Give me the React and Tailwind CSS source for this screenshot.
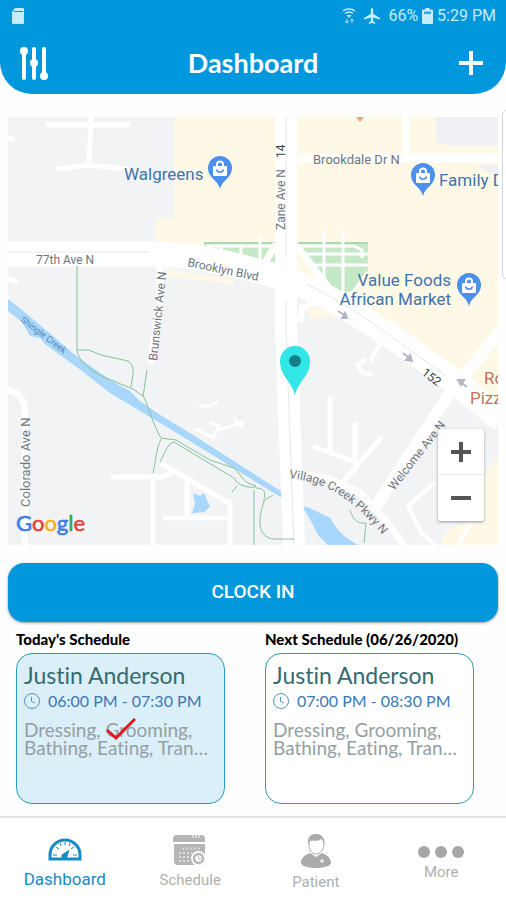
import clsx from 'clsx';

const pois = [
	{ x: 220, y: 184 },
	{ x: 423, y: 191 },
	{ x: 469, y: 301 },
];

const logoLetters = [
	{ letter: 'G', color: '#3f7ee8' },
	{ letter: 'o', color: '#e0453a' },
	{ letter: 'o', color: '#f2b51c' },
	{ letter: 'g', color: '#3f7ee8' },
	{ letter: 'l', color: '#36a455' },
	{ letter: 'e', color: '#e0453a' },
];

const schedules = [
	{
		id: 'today',
		heading: "Today's Schedule",
		name: 'Justin Anderson',
		time: '06:00 PM - 07:30 PM',
		tasks: ['Dressing, Grooming,', 'Bathing, Eating, Tran…'],
		done: true,
	},
	{
		id: 'next',
		heading: 'Next Schedule (06/26/2020)',
		name: 'Justin Anderson',
		time: '07:00 PM - 08:30 PM',
		tasks: ['Dressing, Grooming,', 'Bathing, Eating, Tran…'],
		done: false,
	},
];

const StatusBar = () => (
	<div className="flex h-8 items-center justify-between pr-2.5 pl-3 text-[#c5ecfb]">
		<svg width="12" height="16" viewBox="0 0 12 16" fill="currentColor">
			<path d="M3 0h8a1 1 0 0 1 1 1v14a1 1 0 0 1-1 1H1a1 1 0 0 1-1-1V4z" />
			<path d="M2 3.500h9" stroke="#0097dc" strokeWidth="1" />
		</svg>
		<div className="flex items-center gap-1 font-[Roboto,sans-serif] text-base">
			<svg width="14" height="16" viewBox="0 0 14 16" fill="none">
				<g stroke="currentColor" strokeWidth="1.500">
					<path d="M1 3c3.500-2.700 8.500-2.700 12 0M3 5.500c2.500-1.800 5.500-1.800 8 0" />
				</g>
				<path d="M4.500 7h5L7 10z" fill="currentColor" />
				<path
					d="M5 11v4M3.500 13.500 5 15l1.500-1.500M10 15v-4M8.500 12.500 10 11l1.500 1.500"
					stroke="currentColor"
				/>
			</svg>
			<svg
				className="mx-1"
				width="16"
				height="16"
				viewBox="0 0 16 16"
				fill="currentColor">
				<path d="M8 0c.8 0 1.200.8 1.200 1.800v4L16 10v1.600l-6.800-2v3.600l2 1.500V16L8 15l-3.200 1v-1.300l2-1.500V9.600L0 11.600V10l6.800-4.200v-4C6.800.8 7.200 0 8 0z" />
			</svg>
			<span>66%</span>
			<svg width="11" height="16" viewBox="0 0 11 16" fill="currentColor">
				<path d="M3.500 0h4v1.500H10a1 1 0 0 1 1 1V15a1 1 0 0 1-1 1H1a1 1 0 0 1-1-1V2.500a1 1 0 0 1 1-1h2.500z" />
				<path d="M2 3.500h7v2.500H2z" fill="#2fa9e2" />
			</svg>
			<span>5:29 PM</span>
		</div>
	</div>
);

const Header = () => (
	<header className="rounded-b-[32px] bg-[#0097dc] text-white">
		<StatusBar />
		<div className="flex h-[62px] items-center justify-between px-5">
			<button type="button" aria-label="Filters">
				<svg
					width="28"
					height="34"
					viewBox="0 0 28 34"
					fill="currentColor"
					stroke="currentColor"
					strokeWidth="4"
					strokeLinecap="round">
					<path d="M4 4v28M14 3v29M24 3v28" />
					<g stroke="none">
						<circle cx="4" cy="5" r="4" />
						<circle cx="14" cy="17" r="4" />
						<circle cx="24" cy="30" r="4" />
					</g>
				</svg>
			</button>
			<h1 className="font-[Lato,sans-serif] text-[27px] font-bold">
				Dashboard
			</h1>
			<button type="button" aria-label="Add">
				<svg width="28" height="24" viewBox="0 0 28 24">
					<path
						d="M13 0v24M1 12h24"
						stroke="currentColor"
						strokeWidth="4"
					/>
				</svg>
			</button>
		</div>
	</header>
);

const PoiPin = ({ x, y }) => (
	<g transform={`translate(${x} ${y})`}>
		<path
			d="M0 5C-2-4-12-6-12-16a12 12 0 0 1 24 0C12-6 2-4 0 5z"
			fill="#4a90ec"
		/>
		<rect x="-7" y="-18" width="14" height="10" rx="1" fill="#fff" />
		<path
			d="M-3-18v-1.500a3 3 0 0 1 6 0v1.500"
			fill="none"
			stroke="#fff"
			strokeWidth="2"
		/>
		<path
			d="M-3.500-14.500c1 3.500 6 3.500 7 0"
			fill="none"
			stroke="#4a90ec"
			strokeWidth="1.500"
		/>
	</g>
);

const MapCanvas = () => (
	<svg
		className="block h-auto w-full font-[Roboto,sans-serif]"
		viewBox="8 117 490 428"
		role="img"
		aria-label="Map">
		<rect x="8" y="117" width="490" height="428" fill="#f1f3f4" />

		{/* Commercial areas */}
		<g fill="#fef9e6">
			<path d="M174 117H498V412L440 362L350 302L280 278L155 244V218H174z" />
			<path d="M165 268l68 12v5l-68-9zM308 309l18-2 12 10-28 2zM484 470l14-12v87h-56c-2-12 10-18 22-21l20-4z" />
		</g>
		<path d="M436 117h62v29h-50l-12-4zM476 166l22-2v12z" fill="#eef0f4" />
		<path d="M204 242h72v22l-30-5-42-9zM297 242h71v28l-14 20-14 4-20-12z" fill="#c5e8c6" />
		<path d="M204 243h70M299 243h69" fill="none" stroke="#abd8ae" strokeWidth="2" />
		<path
			d="M206 246h68M221 245v16M241 245v18M260 236v28M298 246h56l8 4v8M300 254h68M308 265h60M324 230v50M343 230v62M367 273l-18 24"
			fill="none"
			stroke="#fff"
			strokeWidth="3"
		/>

		{/* Water */}
		<g fill="#a9d7fb">
			<path d="M8 299l14 11 38 32 15 13 35 25 20 11 10 10 17 12 33 20 92 59v6l-97-60-35-21-25-15-15-9-28-22-37-27-5-6-10-2-8-14-14-11z" />
			<path d="M302 506l8 2 14 7c8 2 8 7 12 12 6 8 10 11 22 18h-30l-10-10-6-12z" />
			<path d="M193 493l7 3 4-3 6 14-6 5-12 1 3-9z" />
		</g>

		{/* Minor streets */}
		<g fill="none" stroke="#fff" strokeWidth="5" strokeLinecap="round">
			<path d="M48 125h80M91 117l-2 49M58 169l31-4 38 4M8 138l5 1M8 278l8 4" />
			<path d="M160 252v50l-9 58" strokeWidth="7" />
			<path d="M8 390c10 2 15 8 17 18v137" strokeWidth="6" />
			<path d="M113 477h50l9-5M153 477v68M162 464l65 38M187 482v34M165 518h62M230 502v43" strokeWidth="5" />
			<path d="M200 406h10l7-4M196 429l17 9 6-12-8-3M220 430l23-8M234 418l8 9" strokeWidth="3" />
			<path d="M330 399v52M315 447l43 16M355 424v34M380 439l-36 42" />
			<path d="M380 343l-9 18M357 365l6 8 8 1M357 365l8-5" strokeWidth="4" />
			<path d="M434 483l-26 23 14 28 12 10M470 525l-12 20" strokeWidth="4" />
			<path d="M404 545l-18-24-26-28-30-14-38-7" strokeWidth="7" />
		</g>

		{/* Main roads */}
		<g fill="none" stroke="#fff">
			<path d="M298 158H498" strokeWidth="9" />
			<path d="M406 117v40" strokeWidth="7" />
			<path d="M8 254H150C200 254 240 266 290 280C340 300 390 334 452 380L502 420" strokeWidth="25" />
			<path d="M286 117V330L294 545" strokeWidth="22" />
			<path d="M262 268l14-24M297 246l32 42" strokeWidth="7" />
			<path d="M300 322l2-14 16-6" strokeWidth="6" />
			<path d="M372 512L452 390L500 332" strokeWidth="12" />
		</g>
		<g fill="none" stroke="#e6e8eb">
			<path d="M8 252H150M286 117V255M286 300V330L294 545M306 284C350 304 390 336 446 376" />
		</g>
		<g stroke="#b4b7c6" strokeWidth="2" fill="#b4b7c6">
			<path d="M338 311l6 4M347 318l-5 0 3-5zM403 353l5 4M412 361l-6-1 4-5zM467 387l-5-4M458 380l6 0-3 5z" />
		</g>

		{/* Trails */}
		<g fill="none" stroke="#84c29b" strokeWidth="1">
			<path d="M77 266v84c2 14 18 24 34 30l22 9 11 8c6 14 10 30 17 41l15 2 34 20 24 8c10 10 8 14 22 18" />
			<path d="M77 350l12 0 12 5 27 6c6 4 5 10 5 14l-2 12M147 370l-4 27M161 439c-5 10-5 22-8 34M160 462c5-10 8-19 14-20l60 36c3 6 10 10 22 9M232 492l5-6M254 490v55M256 488c12 0 8 8 8 14-8 22-4 36 10 37h20M265 500l8-5M350 510c3 10 8 14 16 13l-2 20" />
		</g>

		{/* Street labels */}
		<g fill="#71757a" fontSize="12">
			<text x="36" y="264">77th Ave N</text>
			<text x="313" y="164" fontSize="13">
				Brookdale Dr N
			</text>
			<text transform="translate(187 266) rotate(12)">Brooklyn Blvd</text>
			<text transform="translate(285 230) rotate(-90)">Zane Ave N</text>
			<text transform="translate(157 361) rotate(-84)">Brunswick Ave N</text>
			<text transform="translate(30 507) rotate(-90)" fontSize="13">
				Colorado Ave N
			</text>
			<text transform="translate(394 491) rotate(-52)">Welcome Ave N</text>
			<path id="village-creek" d="M289 478C325 482 352 496 388 542" fill="none" />
			<text>
				<textPath href="#village-creek">Village Creek Pkwy N</textPath>
			</text>
		</g>
		<text transform="translate(20 321) rotate(37)" fontSize="9" fill="#4f86b4">
			Shingle Creek
		</text>
		<g fill="#3c4043" fontSize="12">
			<text transform="translate(285 158) rotate(-90)">14</text>
			<text transform="translate(421 374) rotate(38)">152</text>
		</g>

		{/* Places */}
		<g fill="#4272ac" fontSize="17">
			<text x="124" y="180">Walgreens</text>
			<text x="439" y="186">Family Dollar</text>
			<text x="451" y="286" textAnchor="end">Value Foods</text>
			<text x="451" y="305" textAnchor="end">African Market</text>
		</g>
		<g fill="#c27058" fontSize="17">
			<text x="484" y="384">Rocco's</text>
			<text x="470" y="404">Pizza</text>
		</g>
		{pois.map((poi) => (
			<PoiPin key={poi.x} x={poi.x} y={poi.y} />
		))}
		<path d="M356 117h8l-4 5z" fill="#e9a07c" />

		{/* Current location */}
		<path
			d="M295 396c-2-14-15-19-15-35a15 15 0 0 1 30 0c0 16-13 21-15 35z"
			fill="#33e6e6"
		/>
		<circle cx="295" cy="361" r="6" fill="#117f85" />

		<text x="16" y="531" fontSize="22" className="font-[Lato,sans-serif]">
			{logoLetters.map(({ letter, color }, index) => (
				<tspan key={index} fill={color} stroke={color} strokeWidth="0.600">
					{letter}
				</tspan>
			))}
		</text>
	</svg>
);

const MapPanel = () => (
	<section className="relative">
		<MapCanvas />
		<div className="absolute right-3.5 bottom-6 flex flex-col divide-y divide-gray-200 rounded-xs bg-white text-[#555] shadow-sm shadow-gray-400">
			<button
				type="button"
				aria-label="Zoom in"
				className="flex size-[46px] items-center justify-center">
				<svg width="22" height="22" viewBox="0 0 22 22">
					<path d="M11 1v20M1 11h20" stroke="currentColor" strokeWidth="4" />
				</svg>
			</button>
			<button
				type="button"
				aria-label="Zoom out"
				className="flex size-[46px] items-center justify-center">
				<svg width="22" height="22" viewBox="0 0 22 22">
					<path d="M1 11h20" stroke="currentColor" strokeWidth="4" />
				</svg>
			</button>
		</div>
	</section>
);

const ScheduleCard = ({ heading, name, time, tasks, done }) => (
	<article className="font-[Lato,sans-serif] [font-variant-ligatures:none]">
		<h2 className="text-[15px] leading-5 font-black whitespace-nowrap text-black">
			{heading}
		</h2>
		<div
			className={clsx(
				'relative mt-1 h-[151px] rounded-2xl border border-[#2a9bb8] px-[7px] pt-[7px] whitespace-nowrap',
				done ? 'bg-[#dbeff8]' : 'bg-white',
			)}>
			<h3 className="text-[23px] leading-7 text-[#356b70]">{name}</h3>
			<p className="flex h-6 items-center gap-2 text-base text-[#3a78b5]">
				<svg
					width="16"
					height="16"
					viewBox="0 0 16 16"
					fill="none"
					stroke="#4f96c0">
					<circle cx="8" cy="8" r="7.500" />
					<path d="M7.500 4v4.500l3.500 1.500" />
				</svg>
				{time}
			</p>
			<p className="mt-2 text-[19px] leading-[18px] text-[#94a0a3]">
				{tasks.map((line) => (
					<span key={line} className="block">
						{line}
					</span>
				))}
			</p>
			{done && (
				<svg
					className="absolute top-16 left-[89px]"
					width="30"
					height="22"
					viewBox="0 0 30 22">
					<path
						d="M1 12l9 8L29 1"
						fill="none"
						stroke="#dd1a22"
						strokeWidth="3"
					/>
				</svg>
			)}
		</div>
	</article>
);

const GaugeIcon = () => (
	<svg width="34" height="23" viewBox="0 0 34 23" fill="none">
		<path
			d="M2 21v-4a15 15 0 0 1 30 0v4z"
			stroke="#168bc4"
			strokeWidth="3"
		/>
		<path
			d="M5 17h4M25 17h4M8 9l3 2M26 9l-3 2M12 5l1 3M17 4v3M22 5l-1 3"
			stroke="#168bc4"
		/>
		<path d="M21.500 11.500l-2 7a3 3 0 1 1-4-3z" fill="#168bc4" />
	</svg>
);

const CalendarIcon = () => (
	<svg width="34" height="32" viewBox="0 0 34 32" fill="#b5b5b5">
		<path d="M0 8V5a4 4 0 0 1 4-4h24a4 4 0 0 1 4 4v3zM1 10h31v17a4 4 0 0 1-4 4H5a4 4 0 0 1-4-4z" />
		<path d="M20 1v3M23 1v3M26 1v3" stroke="#fff" />
		<path
			d="M9 14.500h20M6 19h13M6 23h12M6 27h12"
			stroke="#ddd"
			strokeWidth="2"
			strokeDasharray="2 2"
		/>
		<circle cx="25.500" cy="24.500" r="7.500" fill="#fff" />
		<circle cx="25.500" cy="24.500" r="4.500" fill="none" stroke="#b5b5b5" strokeWidth="2.500" />
		<path d="M25.500 22v3h2.500" fill="none" stroke="#b5b5b5" />
	</svg>
);

const PatientIcon = () => (
	<svg width="30" height="34" viewBox="0 0 30 34" fill="#ababab">
		<path d="M0 29c0-6 5-8 9-10l6 4 6-4c4 2 9 4 9 10 0 3-8 5-15 5S0 32 0 29z" />
		<path
			d="M8 9c0-6 3-8 7-8s8 2 8 8c0 6-3 11-8 11S8 15 8 9z"
			fill="#fff"
			stroke="#ababab"
		/>
		<path d="M7 10C6 3 10 0 15 0s9 3 8 10c-1-2-1-4-3-5-3 3-8 1-11 2-1 1-1 2-2 3z" />
		<path d="M21 25v4M19 27h4" stroke="#eee" strokeWidth="1.500" />
	</svg>
);

const DotsIcon = () => (
	<svg width="46" height="12" viewBox="0 0 46 12" fill="#a6a6a6">
		<circle cx="6" cy="6" r="6" />
		<circle cx="23" cy="6" r="6" />
		<circle cx="40" cy="6" r="6" />
	</svg>
);

const tabs = [
	{ label: 'Dashboard', icon: GaugeIcon, active: true },
	{ label: 'Schedule', icon: CalendarIcon },
	{ label: 'Patient', icon: PatientIcon },
	{ label: 'More', icon: DotsIcon },
];

const TabBar = () => (
	<nav className="mt-auto grid h-[84px] grid-cols-4 border-t-2 border-[#e3e3e3] bg-white px-0.5 font-[Roboto,sans-serif]">
		{tabs.map(({ label, icon: TabIcon, active }) => (
			<a
				key={label}
				href="#"
				aria-current={active ? 'page' : undefined}
				className={clsx(
					'flex flex-col items-center',
					active
						? 'pt-5 text-[17px] text-[#168bc4]'
						: 'text-[15px] text-[#b0b0b0]',
					label === 'More' ? 'pt-7' : !active && 'pt-4',
				)}>
				<TabIcon />
				<span className={clsx('leading-5', active ? 'mt-2' : 'mt-1')}>
					{label}
				</span>
			</a>
		))}
	</nav>
);

export default function App() {
	return (
		<div className="relative flex min-h-screen flex-col overflow-hidden bg-[#fefefe]">
			<Header />
			<div className="absolute top-[109px] -right-1 h-[171px] w-2 rounded-l-md border border-gray-300 bg-white" />
			<main className="px-2 pt-[23px] pb-3">
				<MapPanel />
				<button
					type="button"
					className="mt-[18px] h-[59px] w-full rounded-2xl bg-[#0097dc] font-[Roboto,sans-serif] text-[19px] font-medium text-white shadow-sm shadow-gray-400">
					CLOCK IN
				</button>
				<div className="mt-[7px] grid grid-cols-2 gap-10 pr-6 pl-2">
					{schedules.map(({ id, ...schedule }) => (
						<ScheduleCard key={id} {...schedule} />
					))}
				</div>
			</main>
			<TabBar />
		</div>
	);
}
